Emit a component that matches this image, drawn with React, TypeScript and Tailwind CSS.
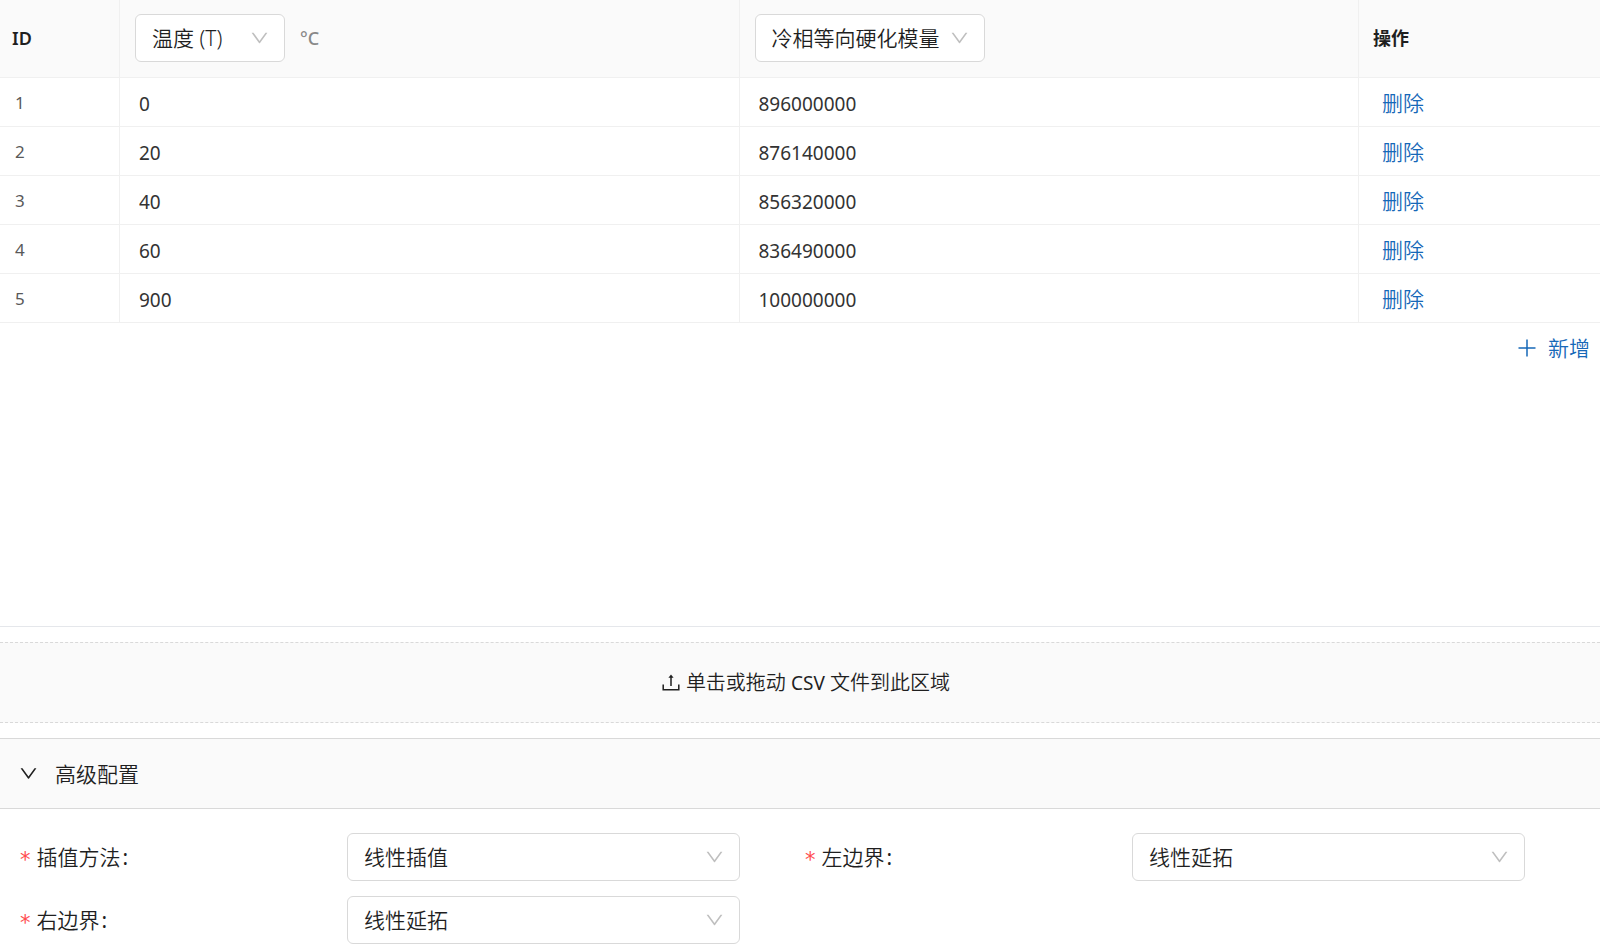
import { useState } from 'react'
import { AiOutlineDown } from 'react-icons/ai'

interface Row {
  id: number
  temperature: string
  modulus: string
}

const initialRows: Row[] = [
  { id: 1, temperature: '0', modulus: '896000000' },
  { id: 2, temperature: '20', modulus: '876140000' },
  { id: 3, temperature: '40', modulus: '856320000' },
  { id: 4, temperature: '60', modulus: '836490000' },
  { id: 5, temperature: '900', modulus: '100000000' },
]

const fields = [
  { id: 'method', label: '插值方法', value: '线性插值' },
  { id: 'left', label: '左边界', value: '线性延拓' },
  { id: 'right', label: '右边界', value: '线性延拓' },
]

interface SelectProps {
  id?: string
  label?: string
  option: string
  className: string
}

function Select({ id, label, option, className }: SelectProps) {
  return (
    <div className={`relative ${className}`}>
      <select
        id={id}
        aria-label={label}
        className="block h-12 w-full appearance-none rounded-md border border-[#d9d9d9] bg-white pl-4 pr-10 pt-0.5 text-[21px] font-[350] text-[#1f1f1f] outline-none"
      >
        <option>{option}</option>
      </select>
      <AiOutlineDown className="pointer-events-none absolute right-[15px] top-[13px] h-[22px] w-[21px] text-[#bfbfbf]" />
    </div>
  )
}

function PlusIcon() {
  return (
    <svg viewBox="0 0 18 18" className="size-[18px]" fill="none" stroke="currentColor" strokeWidth="1.5">
      <path d="M9 0.5v17M0.5 9h17" />
    </svg>
  )
}

function UploadIcon() {
  return (
    <svg viewBox="0 0 18 18" className="size-[18px]" fill="none" stroke="currentColor" strokeWidth="1.5">
      <path d="M1.2 10.5v5.2h15.6v-5.2" />
      <path d="M9 12V3" />
      <path d="M9 0.4L11.6 3.8H6.4z" fill="currentColor" stroke="none" />
    </svg>
  )
}

export default function App() {
  const [rows, setRows] = useState(initialRows)
  const [open, setOpen] = useState(true)

  const update = (id: number, patch: Partial<Row>) =>
    setRows(rows.map((row) => (row.id === id ? { ...row, ...patch } : row)))

  const addRow = () =>
    setRows([...rows, { id: rows.length + 1, temperature: '', modulus: '' }])

  return (
    <div className="flex min-h-screen flex-col bg-white pb-1 font-['Noto_Sans','Noto_Sans_CJK_SC',sans-serif] text-[#1f1f1f]">
      <section className="flex-1 border-b border-gray-200">
        <table className="w-full table-fixed border-separate border-spacing-0">
          <thead>
            <tr className="h-[78px] bg-[#fafafa] text-left text-lg *:border-b *:border-[#f0f0f0] *:pb-0.5">
              <th className="w-[120px] border-r pl-3 font-semibold">ID</th>
              <th className="border-r pl-[15px] font-normal">
                <div className="flex items-center gap-[15px]">
                  <Select label="自变量" option="温度 (T)" className="w-[150px]" />
                  <span className="font-medium text-[#888]">°C</span>
                </div>
              </th>
              <th className="border-r pl-[15px] font-normal">
                <Select label="因变量" option="冷相等向硬化模量" className="w-[230px]" />
              </th>
              <th className="w-[241px] pl-3.5 font-bold">操作</th>
            </tr>
          </thead>
          <tbody>
            {rows.map((row) => (
              <tr key={row.id} className="h-[49px] *:border-b *:border-[#f0f0f0]">
                <td className="border-r pl-[15px] pt-0.5 text-[17px] text-[#595959]">{row.id}</td>
                <td className="border-r pl-[19px]">
                  <input
                    aria-label={`温度 ${row.id}`}
                    value={row.temperature}
                    onChange={(e) => update(row.id, { temperature: e.target.value })}
                    className="block h-12 w-full pt-[3px] text-[19px] text-[#333] outline-none"
                  />
                </td>
                <td className="border-r pl-[19px]">
                  <input
                    aria-label={`模量 ${row.id}`}
                    value={row.modulus}
                    onChange={(e) => update(row.id, { modulus: e.target.value })}
                    className="block h-12 w-full pt-[3px] text-[19px] text-[#333] outline-none"
                  />
                </td>
                <td className="pl-[23px]">
                  <button
                    onClick={() => setRows(rows.filter((r) => r.id !== row.id))}
                    className="block pt-1 text-[21px] font-[350] text-[#1668b8]"
                  >
                    删除
                  </button>
                </td>
              </tr>
            ))}
          </tbody>
        </table>
        <div className="flex justify-end pr-2.5">
          <button
            onClick={addRow}
            className="flex h-[50px] items-center gap-3 text-[21px] font-[350] text-[#1668b8]"
          >
            <PlusIcon />
            <span className="pt-0.5">新增</span>
          </button>
        </div>
      </section>

      <label className="mt-[15px] flex h-[81px] cursor-pointer items-center justify-center gap-1.5 border-y border-dashed border-[#d9d9d9] bg-[#fafafa] pl-3 text-[20px] font-[350]">
        <input type="file" accept=".csv" className="sr-only" />
        <UploadIcon />
        <span>
          单击或拖动 <span className="text-[19px] font-normal">CSV</span> 文件到此区域
        </span>
      </label>

      <button
        aria-expanded={open}
        onClick={() => setOpen(!open)}
        className="mt-[15px] flex h-[71px] items-center gap-4 border-y border-[#d9d9d9] bg-[#fafafa] pl-[18px] text-[21px] font-[350]"
      >
        <AiOutlineDown className="size-[21px]" />
        <span className="pt-0.5">高级配置</span>
      </button>

      {open && (
        <div className="grid grid-cols-2 gap-y-[15px] pl-5 pr-2.5 pt-6">
          {fields.map((field) => (
            <div key={field.id} className="flex items-center">
              <label htmlFor={field.id} className="flex w-5/12 items-center pt-0.5 text-[21px] font-[350]">
                <span className="mr-1.5 pt-1.5 font-['DejaVu_Sans',sans-serif] font-normal text-[#ff4d4f]">*</span>
                {field.label}
                <span className="ml-0.5 font-normal">:</span>
              </label>
              <Select id={field.id} option={field.value} className="w-1/2" />
            </div>
          ))}
        </div>
      )}
    </div>
  )
}
